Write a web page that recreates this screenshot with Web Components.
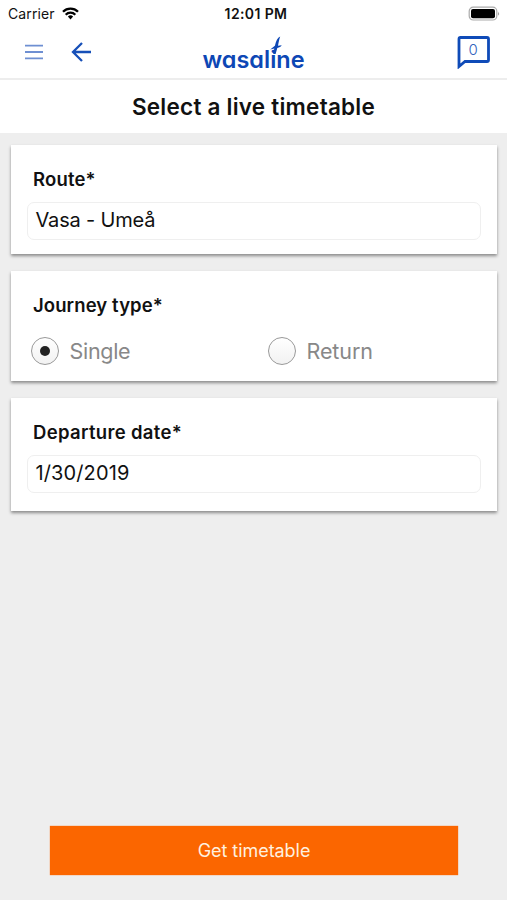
<!DOCTYPE html>
<html lang="en">
<head>
<meta charset="utf-8">
<title>Wasaline</title>
<style>
html,body{margin:0;height:100%;background:#eee}
body{font-family:Inter,"Liberation Sans",sans-serif;color:#111}
</style>
</head>
<body>
<wl-app></wl-app>
<script>
const define=(name,html)=>customElements.define(name,class extends HTMLElement{
  constructor(){super();this.attachShadow({mode:'open'}).innerHTML=html;}
});

define('wl-status',`<style>
:host{display:grid;grid-template-columns:1fr auto 1fr;align-items:center;height:27px;padding:0 6px 0 8px;box-sizing:border-box;font-size:14px;line-height:27px;background:#fff}
.l{display:flex;align-items:center;gap:7px}
.l span{letter-spacing:.1px}
.t{font-weight:600;font-size:14px;letter-spacing:.38px;color:#111;padding-left:3px}
.r{justify-self:end;display:flex}
svg{display:block}
</style>
<div class="l"><span>Carrier</span><svg width="17" height="13" viewBox="0 0 17 13" fill="none" stroke="#000" stroke-width="2.3"><path d="M1 4.7a10.6 10.6 0 0 1 15 0M3.7 7.7a6.8 6.8 0 0 1 9.6 0"/><path d="M5.9 9.6a3.7 3.7 0 0 1 5.2 0L8.5 12.6z" fill="#000" stroke="none"/></svg></div>
<div class="t">12:01 PM</div>
<div class="r"><svg width="33" height="16" viewBox="0 0 33 16"><rect x="1.2" y="1.2" width="27.6" height="12.8" rx="4" fill="#fff" stroke="#aaa" stroke-width="1.2"/><rect x="3" y="3" width="24" height="9.2" rx="2" fill="#000"/><path d="M30.2 5.4q1.8 2.2 0 4.4z" fill="#888"/></svg></div>`);

define('wl-logo',`<style>:host{display:block;width:106px;height:40px}svg{display:block;overflow:visible}
text{font-family:Inter,Lato,sans-serif;font-weight:600;font-size:24px;font-feature-settings:"cv11" 1}</style>
<svg width="106" height="40" viewBox="0 0 106 40" fill="#0d47b5"><text x="1.5" y="36.3" textLength="102" lengthAdjust="spacingAndGlyphs">wasaline</text>
<path d="M79.2 4.6C76.4 5.8 75 9.3 73.9 13.8L69.2 17.6 73.3 16.4 72.2 22H74.6L76.3 15.9C78.3 15.5 80 14.8 80.7 13.2L77 13.7C77.6 10.6 78.3 7.1 79.2 4.6Z"/></svg>`);

define('wl-header',`<style>
:host{display:grid;grid-template-columns:1fr auto 1fr;height:51px;box-sizing:content-box;border-bottom:2px solid #ededed;background:#fff;padding:0 16px 0 25px;align-items:center}
.n{display:flex;align-items:center;gap:28px;margin-top:-1.5px}
wl-logo{margin-left:-8px;margin-top:-1px}
.c{justify-self:end;margin-top:-2px}
svg{display:block}
.c text{font:300 15px Inter,sans-serif}
</style>
<div class="n"><svg width="18" height="16" viewBox="0 0 18 16" stroke="#6e8fd2" stroke-width="1.9"><path d="M0 1.6h18M0 8h18M0 14.4h18"/></svg>
<svg width="21" height="20" viewBox="0 0 21 20" fill="none" stroke="#1750b8" stroke-width="2.3"><path d="M20 10H2M11 1L2 10l9 9"/></svg></div>
<wl-logo></wl-logo>
<svg class="c" width="34" height="34" viewBox="0 0 34 34"><path d="M2 4Q2 2.5 3.5 2.5H30Q31.5 2.5 31.5 4V25Q31.5 26.5 30 26.5H8L2 31.5Z" fill="none" stroke="#0f4bb8" stroke-width="2.8"/><text x="16.2" y="20" text-anchor="middle" fill="#3163bd">0</text></svg>`);

define('wl-title',`<style>:host{display:block;height:52.5px;line-height:53px;text-align:center;background:#fff;font-size:22.5px;font-weight:600}
span{letter-spacing:var(--ls,0)}</style><span><slot></slot></span>`);

define('wl-card',`<style>
:host{display:block;box-sizing:border-box;background:#fff;padding:22px 16px 0 15.5px;box-shadow:0 2px 3px rgba(0,0,0,.42)}
.h{font-size:18.5px;font-weight:600;line-height:24px;padding-left:6.5px;letter-spacing:var(--ls,0)}
</style><div class="h"><slot name="label"></slot></div><slot></slot>`);

define('wl-field',`<style>
:host{display:block;box-sizing:border-box;height:38px;line-height:35px;margin-top:11px;border:1.5px solid #efefef;border-radius:7px;padding-left:8px;font-size:20px;letter-spacing:var(--ls,0)}
</style><slot></slot>`);

define('wl-radio',`<style>
:host{display:flex;align-items:center;gap:11px;color:#888;font-size:21.5px;line-height:28px;letter-spacing:var(--ls,0)}
i{box-sizing:border-box;width:28px;height:28px;border:1.6px solid #999;border-radius:50%;background:linear-gradient(#fff,#f2f2f2);display:grid;place-items:center}
:host([checked]) i::after{content:"";width:10px;height:10px;border-radius:50%;background:#222}
</style><i></i><span><slot></slot></span>`);

define('wl-button',`<style>
:host{display:block;height:49px;line-height:50px;box-sizing:border-box;text-align:center;background:#fb6600;color:#fff0df;font-size:18px;letter-spacing:var(--ls,0);box-shadow:0 0 1px #fb6600}
</style><slot></slot>`);

define('wl-app',`<style>
:host{display:flex;flex-direction:column;height:900px;background:#eee}
main{display:flex;flex-direction:column;gap:17px;padding:12.5px 10px 0 11px}
.r{display:grid;grid-template-columns:237px 1fr;padding-left:4px;margin-top:20px}
wl-button{margin:auto 49px 25px 50px}
</style>
<wl-status></wl-status><wl-header></wl-header>
<wl-title style="--ls:.24px">Select a live timetable</wl-title>
<main>
<wl-card style="height:109px;--ls:.15px"><span slot="label">Route*</span><wl-field style="--ls:-.17px">Vasa - Umeå</wl-field></wl-card>
<wl-card style="height:110px;--ls:.1px"><span slot="label">Journey type*</span><div class="r"><wl-radio checked style="--ls:-.3px">Single</wl-radio><wl-radio style="--ls:-.1px">Return</wl-radio></div></wl-card>
<wl-card style="height:113px;--ls:.32px"><span slot="label">Departure date*</span><wl-field style="--ls:.12px">1/30/2019</wl-field></wl-card>
</main>
<wl-button style="--ls:-.05px">Get timetable</wl-button>`);
</script>
</body>
</html>
